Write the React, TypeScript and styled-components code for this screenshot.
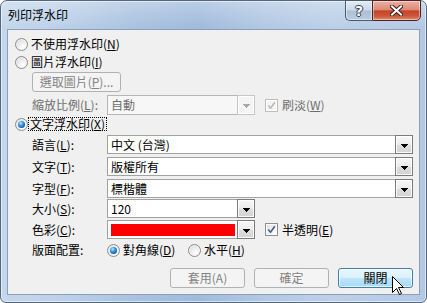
import React from "react";
import styled, { createGlobalStyle, css } from "styled-components";

const GlobalStyle = createGlobalStyle`
  html, body { margin: 0; padding: 0; background: #ffffff; }
  body {
    width: 427px;
    height: 303px;
    overflow: hidden;
    font-family: "Noto Sans CJK TC", "Noto Sans", "Liberation Sans", sans-serif;
    font-size: 12px;
    color: #000;
  }
  * { box-sizing: border-box; }
`;

const Window = styled.div`
  position: relative;
  width: 427px;
  height: 303px;
  border: 1px solid #56677d;
  border-radius: 7px 7px 6px 6px;
  padding: 0 6px 7px 6px;
  display: flex;
  flex-direction: column;
  background:
    linear-gradient(to bottom, rgba(255, 255, 255, 0.28), rgba(255, 255, 255, 0) 26px),
    linear-gradient(to right, #c4d7ec 0%, #bcd1e9 14%, #a9c2df 32%, #a0bbdb 46%, #b2c8e3 62%, #bcd0e8 78%, #b3c9e3 100%);
  box-shadow: inset 0 0 0 1px rgba(255, 255, 255, 0.55);
`;

const TitleBar = styled.div`
  height: 28px;
  flex: none;
  display: flex;
  align-items: flex-start;
  justify-content: space-between;
`;

const TitleText = styled.div`
  margin: 6px 0 0 1px;
  line-height: 16px;
  font-size: 12px;
  color: #000;
`;

const CaptionButtons = styled.div`
  display: flex;
  margin: -1px -1px 0 0;
`;

const CaptionButton = styled.div<{ $kind: "help" | "close" }>`
  height: 21px;
  display: flex;
  align-items: center;
  justify-content: center;
  box-shadow: inset 0 0 0 1px rgba(255, 255, 255, 0.45);
  ${(p) =>
    p.$kind === "help"
      ? css`
          width: 27px;
          border: 1px solid #4b5b70;
          border-right: none;
          border-radius: 0 0 0 5px;
          background: linear-gradient(to bottom, #e3ebf5 0%, #ccd9e8 48%, #aebfd4 52%, #bdcde0 100%);
        `
      : css`
          width: 49px;
          border: 1px solid #4a2424;
          border-radius: 0 0 5px 0;
          background: linear-gradient(to bottom, #eab0a2 0%, #dc8a76 46%, #c4442b 52%, #cc5537 78%, #e08e6c 100%);
        `}
`;

const HelpGlyph = styled.span`
  font-family: "DejaVu Sans", sans-serif;
  font-weight: bold;
  font-size: 14px;
  line-height: 14px;
  color: #ffffff;
  text-shadow: 1px 0 0 #2d3d52, -1px 0 0 #2d3d52, 0 1px 0 #2d3d52, 0 -1px 0 #2d3d52;
`;

const Client = styled.div`
  flex: 1;
  background: #f0f0f0;
  border: 1px solid #8c9fb8;
  padding: 6px 6px 6px 7px;
  display: flex;
  flex-direction: column;
`;

const OptionRow = styled.div<{ $mt?: number }>`
  display: flex;
  align-items: center;
  height: 16px;
  margin-top: ${(p) => p.$mt ?? 0}px;
`;

const RadioOption = styled.label<{ $width?: number }>`
  display: flex;
  align-items: center;
  gap: 3px;
  line-height: 16px;
  white-space: nowrap;
  ${(p) => p.$width && css`width: ${p.$width}px; flex: none;`}
`;

const RadioCircle = styled.span<{ $checked?: boolean }>`
  position: relative;
  flex: none;
  width: 13px;
  height: 13px;
  border-radius: 50%;
  border: 1px solid #8a8b8b;
  background: radial-gradient(circle at 65% 70%, #ffffff 0%, #ececec 45%, #d0d0d0 100%);
  box-shadow: inset 0 0 0 1px rgba(255, 255, 255, 0.6);
  ${(p) =>
    p.$checked &&
    css`
      &::after {
        content: "";
        position: absolute;
        left: 2px;
        top: 2px;
        width: 7px;
        height: 7px;
        border-radius: 50%;
        background: radial-gradient(circle at 38% 32%, #b6e6ff 0%, #3d9ce8 35%, #0f5aa8 75%, #0a3f7a 100%);
      }
    `}
`;

const FocusText = styled.span`
  outline: 1px dotted #000;
  outline-offset: 0;
  line-height: 12px;
  padding: 0 1px;
  margin-left: -2px;
`;

const Mn = styled.span`
  text-decoration: underline;
  text-underline-offset: 1px;
`;

const Indented = styled.div`
  display: flex;
  flex-direction: column;
  padding-left: 17px;
`;

const SmallButton = styled.div`
  margin-top: 2px;
  width: 89px;
  height: 20px;
  border: 1px solid #adb2b5;
  border-radius: 3px;
  background: #f4f4f4;
  color: #838383;
  display: flex;
  align-items: center;
  justify-content: center;
  line-height: 16px;
  white-space: nowrap;
`;

const FieldRow = styled.div<{ $mt: number; $h?: number }>`
  display: flex;
  align-items: center;
  height: ${(p) => p.$h ?? 19}px;
  margin-top: ${(p) => p.$mt}px;
`;

const FieldLabel = styled.span<{ $disabled?: boolean }>`
  width: 75px;
  flex: none;
  line-height: 16px;
  white-space: nowrap;
  color: ${(p) => (p.$disabled ? "#6d6d6d" : "#000")};
`;

const Combo = styled.div<{ $width?: number; $disabled?: boolean }>`
  display: flex;
  align-items: stretch;
  height: 100%;
  ${(p) => (p.$width ? css`width: ${p.$width}px; flex: none;` : css`flex: 1;`)}
  border: 1px solid ${(p) => (p.$disabled ? "#b5b5b5" : "#a2a2a2")};
  background: ${(p) => (p.$disabled ? "#f7f7f7" : "#ffffff")};
`;

const ComboText = styled.span<{ $disabled?: boolean }>`
  flex: 1;
  padding-left: 3px;
  line-height: 17px;
  white-space: nowrap;
  overflow: hidden;
  color: ${(p) => (p.$disabled ? "#6d6d6d" : "#000")};
`;

const Swatch = styled.span<{ $color: string }>`
  flex: 1;
  margin: 3px 2px 2px 3px;
  background: ${(p) => p.$color};
`;

const DropButton = styled.span<{ $disabled?: boolean }>`
  flex: none;
  width: 18px;
  margin: -1px -1px -1px 0;
  border: 1px solid ${(p) => (p.$disabled ? "#c6c6c6" : "#7b7b7b")};
  background: ${(p) =>
    p.$disabled ? "#f4f4f4" : "linear-gradient(to bottom, #f7f7f7 0%, #ececec 50%, #dcdcdc 51%, #d4d4d4 100%)"};
  box-shadow: inset 0 0 0 1px rgba(255, 255, 255, 0.85);
  display: flex;
  align-items: center;
  justify-content: center;
  padding-top: 2px;
  svg { display: block; }
`;

const CheckOption = styled.label<{ $disabled?: boolean }>`
  display: flex;
  align-items: center;
  gap: 4px;
  margin-left: 10px;
  line-height: 16px;
  white-space: nowrap;
  color: ${(p) => (p.$disabled ? "#6d6d6d" : "#000")};
`;

const CheckBox = styled.span<{ $disabled?: boolean }>`
  flex: none;
  width: 13px;
  height: 13px;
  border: 1px solid ${(p) => (p.$disabled ? "#bcbcbc" : "#8e8f8f")};
  background: ${(p) =>
    p.$disabled ? "#f4f4f4" : "linear-gradient(135deg, #dcdcdc 0%, #f2f2f2 55%, #ffffff 100%)"};
  box-shadow: inset 0 0 0 1px ${(p) => (p.$disabled ? "#ffffff" : "rgba(255,255,255,0.9)")};
  display: flex;
  align-items: center;
  justify-content: center;
  svg { display: block; }
`;

const ButtonRow = styled.div`
  margin-top: auto;
  display: flex;
  justify-content: flex-end;
  gap: 9px;
`;

const PushButton = styled.div<{ $variant: "disabled" | "hot" }>`
  width: 75px;
  height: 20px;
  border-radius: 3px;
  display: flex;
  align-items: center;
  justify-content: center;
  line-height: 16px;
  white-space: nowrap;
  ${(p) =>
    p.$variant === "disabled"
      ? css`
          border: 1px solid #adb2b5;
          background: #f4f4f4;
          color: #838383;
        `
      : css`
          border: 1px solid #3c7fb1;
          background: linear-gradient(to bottom, #eaf6fd 0%, #d9f0fc 50%, #bee6fd 51%, #a7d9f5 100%);
          box-shadow: inset 0 0 0 1px rgba(255, 255, 255, 0.7);
          color: #000;
        `}
`;

const Cursor = styled.svg`
  position: absolute;
  left: 391px;
  top: 275px;
  pointer-events: none;
`;

const Arrow = ({ disabled }: { disabled?: boolean }) => (
  <svg width="7" height="4" viewBox="0 0 7 4" shapeRendering="crispEdges">
    <path d="M0 0h7v1h-1v1h-1v1h-1v1h-1v-1h-1v-1h-1v-1h-1z" fill={disabled ? "#a8a8a8" : "#000"} />
  </svg>
);

const Check = ({ disabled }: { disabled?: boolean }) => (
  <svg width="9" height="9" viewBox="0 0 9 9">
    <path
      d="M1.3 4.6 L3.5 7.2 L7.8 1.2"
      fill="none"
      stroke={disabled ? "#b9b9b9" : "#4a5e8c"}
      strokeWidth="1.6"
      strokeLinejoin="round"
    />
  </svg>
);

export default function App() {
  return (
    <>
      <GlobalStyle />
      <Window>
        <TitleBar>
          <TitleText>列印浮水印</TitleText>
          <CaptionButtons>
            <CaptionButton $kind="help">
              <HelpGlyph>?</HelpGlyph>
            </CaptionButton>
            <CaptionButton $kind="close">
              <svg width="13" height="11" viewBox="0 0 13 11">
                <path d="M2 1.5 L11 9.5 M11 1.5 L2 9.5" stroke="#3a1c1c" strokeWidth="4" strokeLinecap="square" />
                <path d="M2 1.5 L11 9.5 M11 1.5 L2 9.5" stroke="#ffffff" strokeWidth="2" strokeLinecap="square" />
              </svg>
            </CaptionButton>
          </CaptionButtons>
        </TitleBar>

        <Client>
          <OptionRow>
            <RadioOption>
              <RadioCircle />
              <span>
                不使用浮水印(<Mn>N</Mn>)
              </span>
            </RadioOption>
          </OptionRow>
          <OptionRow $mt={2}>
            <RadioOption>
              <RadioCircle />
              <span>
                圖片浮水印(<Mn>I</Mn>)
              </span>
            </RadioOption>
          </OptionRow>

          <Indented>
            <SmallButton>
              選取圖片(<Mn>P</Mn>)...
            </SmallButton>
            <FieldRow $mt={3} $h={20}>
              <FieldLabel $disabled>
                縮放比例(<Mn>L</Mn>):
              </FieldLabel>
              <Combo $width={148} $disabled>
                <ComboText $disabled>自動</ComboText>
                <DropButton $disabled>
                  <Arrow disabled />
                </DropButton>
              </Combo>
              <CheckOption $disabled>
                <CheckBox $disabled>
                  <Check disabled />
                </CheckBox>
                <span>
                  刷淡(<Mn>W</Mn>)
                </span>
              </CheckOption>
            </FieldRow>
          </Indented>

          <OptionRow $mt={1}>
            <RadioOption>
              <RadioCircle $checked />
              <FocusText>
                文字浮水印(<Mn>X</Mn>)
              </FocusText>
            </RadioOption>
          </OptionRow>

          <Indented>
            <FieldRow $mt={3}>
              <FieldLabel>
                語言(<Mn>L</Mn>):
              </FieldLabel>
              <Combo>
                <ComboText>中文 (台灣)</ComboText>
                <DropButton>
                  <Arrow />
                </DropButton>
              </Combo>
            </FieldRow>
            <FieldRow $mt={3}>
              <FieldLabel>
                文字(<Mn>T</Mn>):
              </FieldLabel>
              <Combo>
                <ComboText>版權所有</ComboText>
                <DropButton>
                  <Arrow />
                </DropButton>
              </Combo>
            </FieldRow>
            <FieldRow $mt={3}>
              <FieldLabel>
                字型(<Mn>F</Mn>):
              </FieldLabel>
              <Combo>
                <ComboText>標楷體</ComboText>
                <DropButton>
                  <Arrow />
                </DropButton>
              </Combo>
            </FieldRow>
            <FieldRow $mt={1}>
              <FieldLabel>
                大小(<Mn>S</Mn>):
              </FieldLabel>
              <Combo $width={148}>
                <ComboText>120</ComboText>
                <DropButton>
                  <Arrow />
                </DropButton>
              </Combo>
            </FieldRow>
            <FieldRow $mt={2}>
              <FieldLabel>
                色彩(<Mn>C</Mn>):
              </FieldLabel>
              <Combo $width={148}>
                <Swatch $color="#ff0000" />
                <DropButton>
                  <Arrow />
                </DropButton>
              </Combo>
              <CheckOption>
                <CheckBox>
                  <Check />
                </CheckBox>
                <span>
                  半透明(<Mn>E</Mn>)
                </span>
              </CheckOption>
            </FieldRow>
            <FieldRow $mt={3} $h={16}>
              <FieldLabel>版面配置:</FieldLabel>
              <RadioOption $width={81}>
                <RadioCircle $checked />
                <span>
                  對角線(<Mn>D</Mn>)
                </span>
              </RadioOption>
              <RadioOption>
                <RadioCircle />
                <span>
                  水平(<Mn>H</Mn>)
                </span>
              </RadioOption>
            </FieldRow>
          </Indented>

          <ButtonRow>
            <PushButton $variant="disabled">套用(A)</PushButton>
            <PushButton $variant="disabled">確定</PushButton>
            <PushButton $variant="hot">關閉</PushButton>
          </ButtonRow>
        </Client>

        <Cursor width="12" height="20" viewBox="0 0 12 20">
          <path
            d="M0.5 0.5 V16.5 L4.5 12.5 L7.5 18.5 L9.5 17.5 L6.5 11.5 H11.5 Z"
            fill="#ffffff"
            stroke="#000000"
            strokeWidth="1"
          />
        </Cursor>
      </Window>
    </>
  );
}
